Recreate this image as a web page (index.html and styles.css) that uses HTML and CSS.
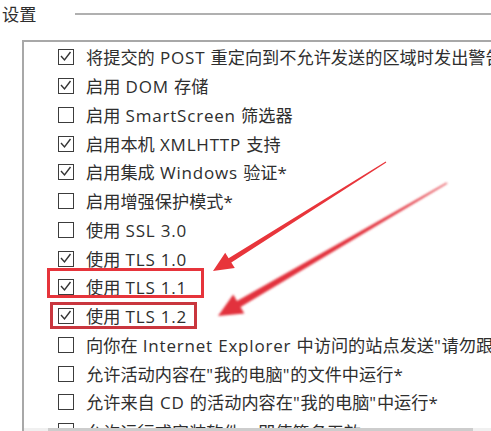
FILE: index.html
```html
<!DOCTYPE html>
<html lang="zh-CN">
<head>
<meta charset="utf-8">
<title>设置</title>
<link rel="stylesheet" href="styles.css">
</head>
<body>
<div class="page">
  <div class="header">
    <span class="title">设置</span>
    <span class="rule"></span>
  </div>
  <div class="box">
    <ul class="list">
      <li class="row"><span class="cb"><svg class="tick" viewBox="0 0 13 13"><polyline points="2,6 5.5,10 11.5,2"/></svg></span><span class="label">将提交的<span class="en"> POST </span>重定向到不允许发送的区域时发出警告</span></li>
      <li class="row"><span class="cb"><svg class="tick" viewBox="0 0 13 13"><polyline points="2,6 5.5,10 11.5,2"/></svg></span><span class="label">启用<span class="en"> DOM </span>存储</span></li>
      <li class="row"><span class="cb"></span><span class="label">启用<span class="en"> SmartScreen </span>筛选器</span></li>
      <li class="row"><span class="cb"><svg class="tick" viewBox="0 0 13 13"><polyline points="2,6 5.5,10 11.5,2"/></svg></span><span class="label">启用本机<span class="en"> XMLHTTP </span>支持</span></li>
      <li class="row"><span class="cb"><svg class="tick" viewBox="0 0 13 13"><polyline points="2,6 5.5,10 11.5,2"/></svg></span><span class="label">启用集成<span class="en"> Windows </span>验证<span class="en">*</span></span></li>
      <li class="row"><span class="cb"></span><span class="label">启用增强保护模式<span class="en">*</span></span></li>
      <li class="row"><span class="cb"></span><span class="label">使用<span class="en"> SSL 3.0</span></span></li>
      <li class="row"><span class="cb"><svg class="tick" viewBox="0 0 13 13"><polyline points="2,6 5.5,10 11.5,2"/></svg></span><span class="label">使用<span class="en"> TLS 1.0</span></span></li>
      <li class="row"><span class="cb"><svg class="tick" viewBox="0 0 13 13"><polyline points="2,6 5.5,10 11.5,2"/></svg></span><span class="label">使用<span class="en"> TLS 1.1</span></span></li>
      <li class="row"><span class="cb"><svg class="tick" viewBox="0 0 13 13"><polyline points="2,6 5.5,10 11.5,2"/></svg></span><span class="label">使用<span class="en"> TLS 1.2</span></span></li>
      <li class="row"><span class="cb"></span><span class="label">向你在<span class="en"> Internet Explorer </span>中访问的站点发送<span class="en">"</span>请勿跟踪<span class="en">"</span>请求</span></li>
      <li class="row"><span class="cb"></span><span class="label">允许活动内容在<span class="en">"</span>我的电脑<span class="en">"</span>的文件中运行<span class="en">*</span></span></li>
      <li class="row"><span class="cb"></span><span class="label">允许来自<span class="en"> CD </span>的活动内容在<span class="en">"</span>我的电脑<span class="en">"</span>中运行<span class="en">*</span></span></li>
      <li class="row"><span class="cb"></span><span class="label">允许运行或安装软件，即使签名无效</span></li>
    </ul>
    <div class="hscroll"><div class="thumb"></div></div>
  </div>
</div>
<svg class="marks" width="491" height="431" viewBox="0 0 491 431" xmlns="http://www.w3.org/2000/svg">
  <defs>
    <filter id="soft" x="-10%" y="-10%" width="120%" height="120%">
      <feGaussianBlur stdDeviation="0.9"/>
    </filter>
  </defs>
  <rect x="48.5" y="269.5" width="154" height="27" fill="none" stroke="#e6343b" stroke-width="3"/>
  <rect x="51.5" y="303.5" width="144" height="24" fill="none" stroke="#c9363e" stroke-width="3"/>
  <polygon fill="#e8353b" points="386.3,162.4 231.3,262.4 234.8,267.9 213,271 225.2,252.7 228.6,258.2 385.7,161.6"/>
  <polygon fill="#e2333d" filter="url(#soft)" points="447.25,183.43 240.5,307 244.3,313.5 218,316 233.2,294.4 237,300.9 446.75,182.57"/>
</svg>
</body>
</html>
```

FILE: styles.css
```css
html, body {
  margin: 0;
  padding: 0;
  background: #ffffff;
  overflow: hidden;
}

body {
  width: 491px;
  height: 431px;
  position: relative;
  font-family: "Noto Sans CJK SC", "Noto Sans", sans-serif;
  color: #2e2e2e;
  font-size: 17.2px;
}

.page {
  width: 491px;
  height: 431px;
  overflow: hidden;
}

.header {
  display: flex;
  align-items: center;
  height: 27px;
}

.title {
  padding-left: 2px;
  line-height: 1;
}

.rule {
  flex: 1;
  height: 2px;
  margin-left: 39px;
  background: #b0b0b0;
}

.box {
  margin-top: 13px;
  margin-left: 22px;
  border-top: 2px solid #a8a8a8;
  border-left: 2px solid #a8a8a8;
  display: flex;
  flex-direction: column;
}

.list {
  list-style: none;
  margin: 0;
  padding: 1px 0 0 34px;
  height: 385px;
  overflow: hidden;
}

.row {
  display: flex;
  align-items: center;
  height: 28.75px;
  white-space: nowrap;
}

.cb {
  flex: none;
  width: 16px;
  height: 16px;
  box-sizing: border-box;
  border: 1.5px solid #3c3c3c;
  margin-right: 12px;
  display: flex;
}

.tick {
  width: 13px;
  height: 13px;
  fill: none;
  stroke: #333333;
  stroke-width: 1.4;
}

.label {
  line-height: 1;
}

.en {
  font-family: "Open Sans", "Noto Sans", sans-serif;
  font-size: 17px;
  letter-spacing: 0.8px;
}

.hscroll {
  height: 17px;
  background: #f0f0f0;
}

.thumb {
  margin-left: 24px;
  width: 425px;
  height: 17px;
  background: #cdcdcd;
}

.marks {
  position: absolute;
  left: 0;
  top: 0;
  pointer-events: none;
}
```
